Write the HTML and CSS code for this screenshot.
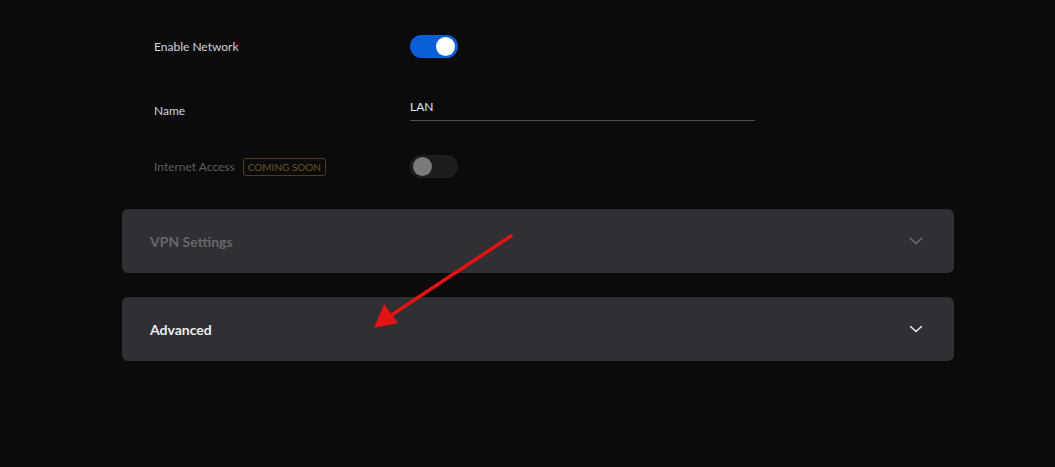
FILE: index.html
```html
<!DOCTYPE html>
<html>
<head>
<meta charset="utf-8">
<link rel="stylesheet" href="styles.css">
</head>
<body>
<div class="page">
  <div class="form">
    <div class="row row-first">
      <div class="label">Enable Network</div>
      <div class="control"><span class="toggle on"><span class="knob"></span></span></div>
    </div>
    <div class="row row-name">
      <div class="label">Name</div>
      <div class="control"><div class="input">LAN</div></div>
    </div>
    <div class="row">
      <div class="label disabled">Internet Access <span class="badge">COMING SOON</span></div>
      <div class="control"><span class="toggle off"><span class="knob"></span></span></div>
    </div>
  </div>
  <div class="panels">
    <div class="panel">
      <span class="panel-title dim">VPN Settings</span>
      <svg class="chev dim-chev" width="14" height="8" viewBox="0 0 14 8"><path d="M1.5 1.5 L7 6.5 L12.5 1.5" fill="none" stroke="currentColor" stroke-width="1.6" stroke-linecap="round" stroke-linejoin="round"/></svg>
    </div>
    <div class="panel">
      <span class="panel-title">Advanced</span>
      <svg class="chev" width="14" height="8" viewBox="0 0 14 8"><path d="M1.5 1.5 L7 6.5 L12.5 1.5" fill="none" stroke="currentColor" stroke-width="1.6" stroke-linecap="round" stroke-linejoin="round"/></svg>
    </div>
  </div>
  <svg class="arrow" width="160" height="110" viewBox="0 0 160 110">
    <line x1="151" y1="11" x2="30" y2="91" stroke="#e31313" stroke-width="3.5" stroke-linecap="round"/>
    <polygon points="14,103 24,79 38,98" fill="#e31313"/>
  </svg>
</div>
</body>
</html>
```

FILE: styles.css
```css
html, body {
  margin: 0;
  padding: 0;
  background: #0b0b0c;
}
body {
  font-family: Lato, "Open Sans", sans-serif;
  width: 1055px;
  height: 467px;
  overflow: hidden;
}
.page {
  position: relative;
  padding: 0 101px 0 122px;
}
.form {
  display: flex;
  flex-direction: column;
  padding-left: 32px;
  padding-top: 35px;
}
.row {
  display: flex;
  align-items: center;
  height: 23px;
  margin-bottom: 41px;
}
.row.row-name { margin-bottom: 33px; }
.row:last-child { margin-bottom: 0; }
.label {
  width: 256px;
  font-size: 12px;
  color: #d4d4d6;
  display: flex;
  align-items: center;
  gap: 8px;
}
.label.disabled { color: #5c5c60; }
.badge {
  font-size: 10px;
  color: #6a5222;
  border: 1px solid #4d3c18;
  border-radius: 3px;
  padding: 2px 4px;
  line-height: 12px;
}
.toggle {
  display: block;
  width: 48px;
  height: 23px;
  border-radius: 12px;
  position: relative;
}
.toggle.on { background: #0a5fd8; }
.toggle.off { background: #1d1d20; }
.knob {
  position: absolute;
  top: 2px;
  width: 19px;
  height: 19px;
  border-radius: 50%;
}
.toggle.on .knob { right: 3px; background: #ffffff; }
.toggle.off .knob { left: 3px; background: #7a7a7c; }
.input {
  width: 345px;
  border-bottom: 1px solid #4a4a4e;
  font-size: 12px;
  color: #e4e4e6;
  padding-bottom: 6px;
  margin-top: -2px;
}
.panels {
  display: flex;
  flex-direction: column;
  gap: 24px;
  margin-top: 31px;
}
.panel {
  height: 64px;
  background: #303034;
  border-radius: 6px;
  display: flex;
  align-items: center;
  justify-content: space-between;
  padding: 0 31px 0 28px;
}
.panel-title {
  font-size: 14px;
  font-weight: 700;
  color: #ececee;
}
.panel-title.dim { color: #66666b; }
.chev { color: #e6e6e8; }
.chev.dim-chev { color: #6a6a6f; }
.arrow {
  position: absolute;
  left: 360px;
  top: 225px;
}
```
